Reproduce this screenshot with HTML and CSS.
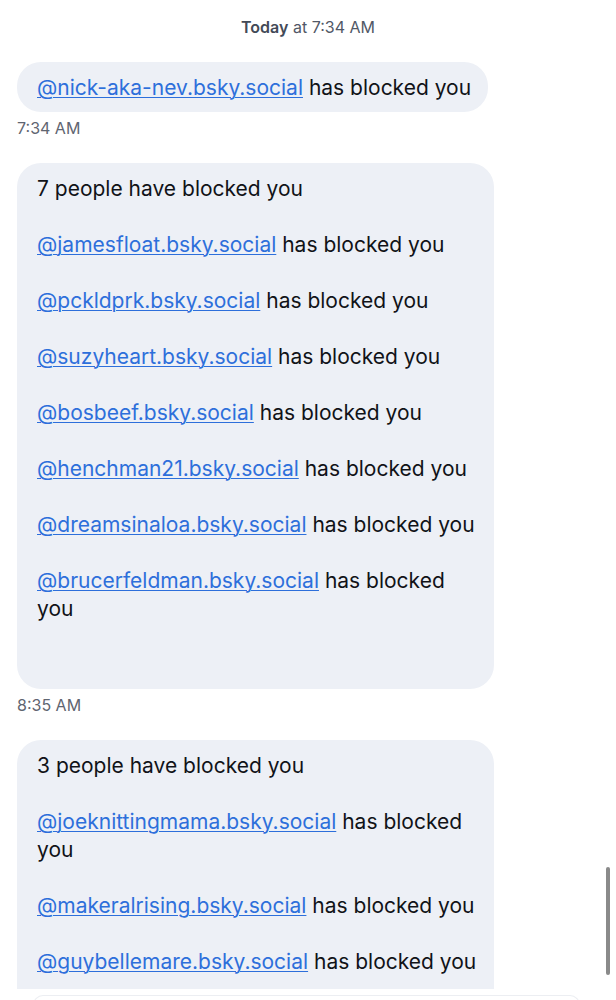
FILE: index.html
```html
<!DOCTYPE html>
<html lang="en">
<head>
<meta charset="utf-8">
<title>Messages</title>
<link rel="stylesheet" href="styles.css">
</head>
<body>
<div class="page">
  <div class="thread">
    <div class="day"><b>Today</b> at 7:34 AM</div>

    <div class="bubble">
      <p><a href="#">@nick-aka-nev.bsky.social</a> has blocked you</p>
    </div>
    <div class="time">7:34 AM</div>

    <div class="bubble">
      <p>7 people have blocked you</p>
      <p><a href="#">@jamesfloat.bsky.social</a> has blocked you</p>
      <p><a href="#">@pckldprk.bsky.social</a> has blocked you</p>
      <p><a href="#">@suzyheart.bsky.social</a> has blocked you</p>
      <p><a href="#">@bosbeef.bsky.social</a> has blocked you</p>
      <p><a href="#">@henchman21.bsky.social</a> has blocked you</p>
      <p><a href="#">@dreamsinaloa.bsky.social</a> has blocked you</p>
      <p><a href="#">@brucerfeldman.bsky.social</a> has blocked you</p>
      <p class="blank">&nbsp;</p>
    </div>
    <div class="time">8:35 AM</div>

    <div class="bubble">
      <p>3 people have blocked you</p>
      <p><a href="#">@joeknittingmama.bsky.social</a> has blocked you</p>
      <p><a href="#">@makeralrising.bsky.social</a> has blocked you</p>
      <p><a href="#">@guybellemare.bsky.social</a> has blocked you</p>
      <p class="blank">&nbsp;</p>
    </div>
  </div>
  <div class="composer"></div>
  <div class="scrollbar"></div>
</div>
</body>
</html>
```
FILE: styles.css
```css
* { box-sizing: border-box; }
html, body { margin: 0; padding: 0; background: #ffffff; }
body {
  font-family: Inter, "Noto Sans", "Liberation Sans", sans-serif;
  color: #111318;
}
.page {
  position: relative;
  width: 616px;
  height: 1000px;
  overflow: hidden;
}
.thread {
  height: 989px;
  overflow: hidden;
  padding: 17px 17px 0 17px;
  display: flex;
  flex-direction: column;
  align-items: flex-start;
}
.day {
  align-self: stretch;
  text-align: center;
  font-size: 16px;
  line-height: 20px;
  color: #515866;
  margin-left: -17px;
  margin-right: -17px;
}
.day b { font-weight: 600; color: #434a57; }
.bubble {
  margin-top: 25px;
  background: #edf0f6;
  border-radius: 24px;
  padding: 12px 17px 10px 20px;
  max-width: 477px;
  display: flex;
  flex-direction: column;
  gap: 28px;
  flex-shrink: 0;
}
.bubble p {
  margin: 0;
  font-size: 21px;
  line-height: 28px;
}
.bubble a {
  color: #2d6fdb;
  text-decoration: underline;
  text-underline-offset: 2px;
  text-decoration-thickness: 1px;
}
.time {
  margin-top: 6px;
  font-size: 16px;
  line-height: 20px;
  color: #5f6571;
}
.composer {
  margin: 6px 36px 0 33px;
  height: 20px;
  border: 1px solid #eceef2;
  border-bottom: none;
  border-radius: 10px 10px 0 0;
}
.scrollbar {
  position: absolute;
  left: 606px;
  top: 867px;
  width: 4px;
  height: 108px;
  border-radius: 2px;
  background: #8a8a8a;
}
```
